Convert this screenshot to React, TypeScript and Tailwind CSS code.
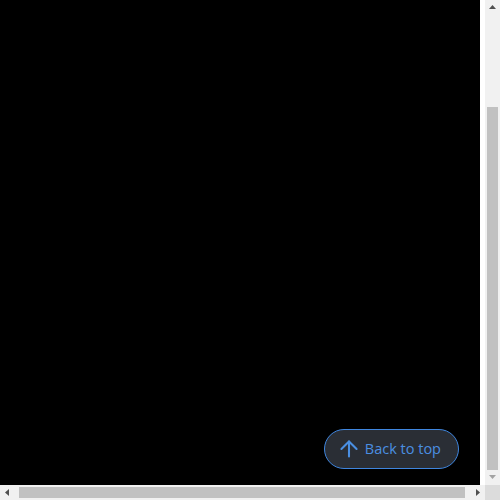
import { ArrowUp } from "lucide-react";

function Arrow({ dir, dim }: { dir: "up" | "down" | "left" | "right"; dim?: boolean }) {
  const points = {
    up: "4,9 11,9 7.5,5",
    down: "4,5 11,5 7.5,9",
    left: "9,4 9,11 5,7.5",
    right: "6,4 6,11 10,7.5",
  }[dir];
  return (
    <svg width="15" height="15" viewBox="0 0 15 15" className="shrink-0">
      <polygon points={points} fill={dim ? "#a3a3a3" : "#505050"} />
    </svg>
  );
}

export default function App() {
  return (
    <div className="relative w-[500px] h-[500px] grid grid-cols-[485px_15px] grid-rows-[485px_15px] font-['Open_Sans',sans-serif]">
      {/* page area */}
      <div className="flex bg-white">
        <div className="w-[480px] h-full bg-black" />
      </div>

      {/* vertical scrollbar */}
      <div className="flex flex-col bg-[#f1f1f1]">
        <Arrow dir="up" />
        <div className="flex-1 flex flex-col pt-[92px] px-[2px]">
          <div className="flex-1 bg-[#c1c1c1]" />
        </div>
        <Arrow dir="down" dim />
      </div>

      {/* horizontal scrollbar */}
      <div className="flex bg-[#f1f1f1]">
        <Arrow dir="left" />
        <div className="flex-1 flex py-[2px] pl-[4px] pr-[5px]">
          <div className="flex-1 bg-[#c1c1c1]" />
        </div>
        <Arrow dir="right" />
      </div>

      <div className="bg-[#dcdcdc]" />

      <button className="absolute bottom-[31px] right-[41px] flex items-center gap-[3px] h-10 pl-[11px] pr-[17px] rounded-full border border-[#3f86df] bg-[#2a2e35] text-[#4a8fe2] text-[14.5px]">
        <ArrowUp size={26} strokeWidth={1.9} />
        <span>Back to top</span>
      </button>
    </div>
  );
}
